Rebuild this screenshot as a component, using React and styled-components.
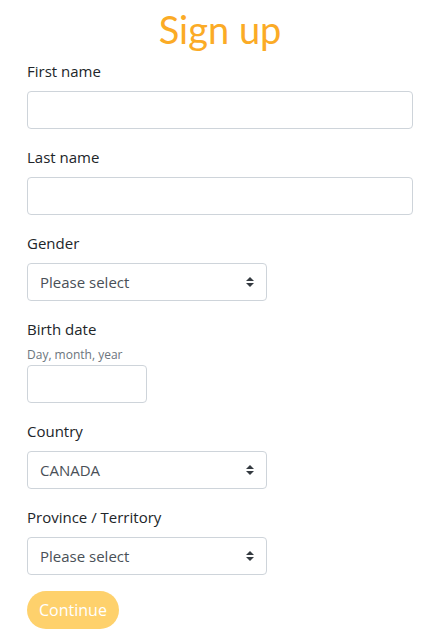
import React from "react";
import styled, { createGlobalStyle } from "styled-components";

const Global = createGlobalStyle`
  body {
    margin: 0;
    background: #fff;
    font-family: "Open Sans", "Noto Sans", sans-serif;
    color: #212529;
  }
`;

const arrows =
  "data:image/svg+xml;charset=utf8,%3Csvg xmlns='http://www.w3.org/2000/svg' viewBox='0 0 4 5'%3E%3Cpath fill='%23343a40' d='M2 0L0 2h4zm0 5L0 3h4z'/%3E%3C/svg%3E";

const Page = styled.div`
  padding: 6px 26px 0 27px;
`;

const Title = styled.h1`
  margin: 0 0 7px;
  text-align: center;
  font-family: Lato, sans-serif;
  font-weight: 400;
  font-size: 38px;
  line-height: 46px;
  color: #fbab26;
`;

const Group = styled.div`
  margin-bottom: 16px;
`;

const Label = styled.label`
  display: block;
  font-size: 15px;
  line-height: 24px;
  margin-bottom: ${(p) => (p.$tight ? "4px" : "8px")};
`;

const Hint = styled.small`
  display: block;
  font-size: 12px;
  line-height: 20px;
  color: #6c757d;
`;

const Input = styled.input`
  display: block;
  box-sizing: border-box;
  width: ${(p) => p.$width || "100%"};
  height: 38px;
  padding: 6px 12px;
  border: 1px solid #ced4da;
  border-radius: 4px;
  font: inherit;
  background: #fff;
`;

const Select = styled.select`
  display: block;
  box-sizing: border-box;
  width: 240px;
  height: 38px;
  padding: 6px 28px 6px 12px;
  border: 1px solid #ced4da;
  border-radius: 4px;
  font-family: inherit;
  font-size: 15px;
  color: #495057;
  appearance: none;
  background: #fff url("${arrows}") no-repeat right 12px center / 8px 10px;
`;

const Button = styled.button`
  height: 38px;
  padding: 0 12px;
  border: none;
  border-radius: 19px;
  background: #fed16c;
  color: #fff;
  font-family: inherit;
  font-size: 16px;
`;

const Field = ({ label, children, hint }) => (
  <Group>
    <Label $tight={!!hint}>{label}</Label>
    {hint && <Hint>{hint}</Hint>}
    {children}
  </Group>
);

export default function App() {
  return (
    <Page>
      <Global />
      <Title>Sign up</Title>
      <Field label="First name">
        <Input type="text" />
      </Field>
      <Field label="Last name">
        <Input type="text" />
      </Field>
      <Field label="Gender">
        <Select defaultValue="">
          <option value="">Please select</option>
          <option>Female</option>
          <option>Male</option>
        </Select>
      </Field>
      <Field label="Birth date" hint="Day, month, year">
        <Input type="text" $width="120px" />
      </Field>
      <Field label="Country">
        <Select defaultValue="CA">
          <option value="CA">CANADA</option>
        </Select>
      </Field>
      <Field label="Province / Territory">
        <Select defaultValue="">
          <option value="">Please select</option>
        </Select>
      </Field>
      <Button type="button">Continue</Button>
    </Page>
  );
}
